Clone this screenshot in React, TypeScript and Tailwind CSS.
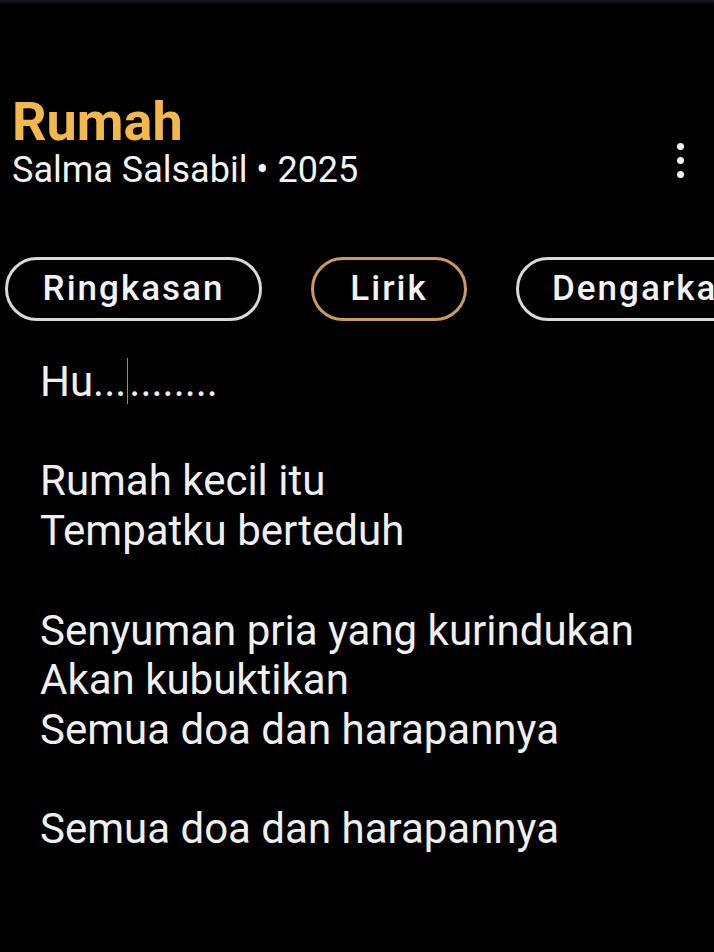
import React from "react";

export default function App() {
  const font = { fontFamily: "Roboto, 'Noto Sans', sans-serif" };
  return (
    <div className="w-[714px] h-[952px] bg-black overflow-hidden relative" style={font}>
      <div className="h-[8px] bg-gradient-to-b from-[#1c1a2a] to-[#000000]" />
      <div className="flex items-end justify-between pl-[12px] pr-[30px] pt-[88px]">
        <div className="flex flex-col">
          <div className="text-[54px] leading-[52px] font-bold text-[#f3b84c]">Rumah</div>
          <div className="text-[36px] leading-[40px] text-[#f2f2f2] mt-[2px]">Salma Salsabil • 2025</div>
        </div>
        <div className="flex flex-col items-center gap-[7px] mb-[12px]">
          <span className="block w-[7px] h-[7px] rounded-full bg-[#f0f0f0]" />
          <span className="block w-[7px] h-[7px] rounded-full bg-[#f0f0f0]" />
          <span className="block w-[7px] h-[7px] rounded-full bg-[#f0f0f0]" />
        </div>
      </div>
      <div className="flex gap-[49px] pl-[5px] mt-[67px] whitespace-nowrap">
        <div className="shrink-0 w-[257px] h-[64px] rounded-full border-[3px] border-[#d9d9d9] flex items-center justify-center text-[35px] font-medium tracking-[2px] text-[#f2f2f2]">
          Ringkasan
        </div>
        <div className="shrink-0 w-[156px] h-[64px] rounded-full border-[3px] border-[#c99a5f] flex items-center justify-center text-[35px] font-medium tracking-[2px] text-[#f2f2f2]">
          Lirik
        </div>
        <div className="shrink-0 w-[257px] h-[64px] rounded-full border-[3px] border-[#d9d9d9] flex items-center pl-[33px] text-[35px] font-medium tracking-[2px] text-[#f2f2f2]">
          Dengarkan
        </div>
      </div>
      <div className="pl-[40px] mt-[36px] text-[42px] leading-[49.7px] text-[#efefef]">
        <div>
          Hu...
          <span className="inline-block w-[1px] h-[46px] bg-[#8a8a8a] align-[-8px] mx-[1px]" />
          ........
        </div>
        <div>&nbsp;</div>
        <div>Rumah kecil itu</div>
        <div>Tempatku berteduh</div>
        <div>&nbsp;</div>
        <div>Senyuman pria yang kurindukan</div>
        <div>Akan kubuktikan</div>
        <div>Semua doa dan harapannya</div>
        <div>&nbsp;</div>
        <div>Semua doa dan harapannya</div>
      </div>
    </div>
  );
}
